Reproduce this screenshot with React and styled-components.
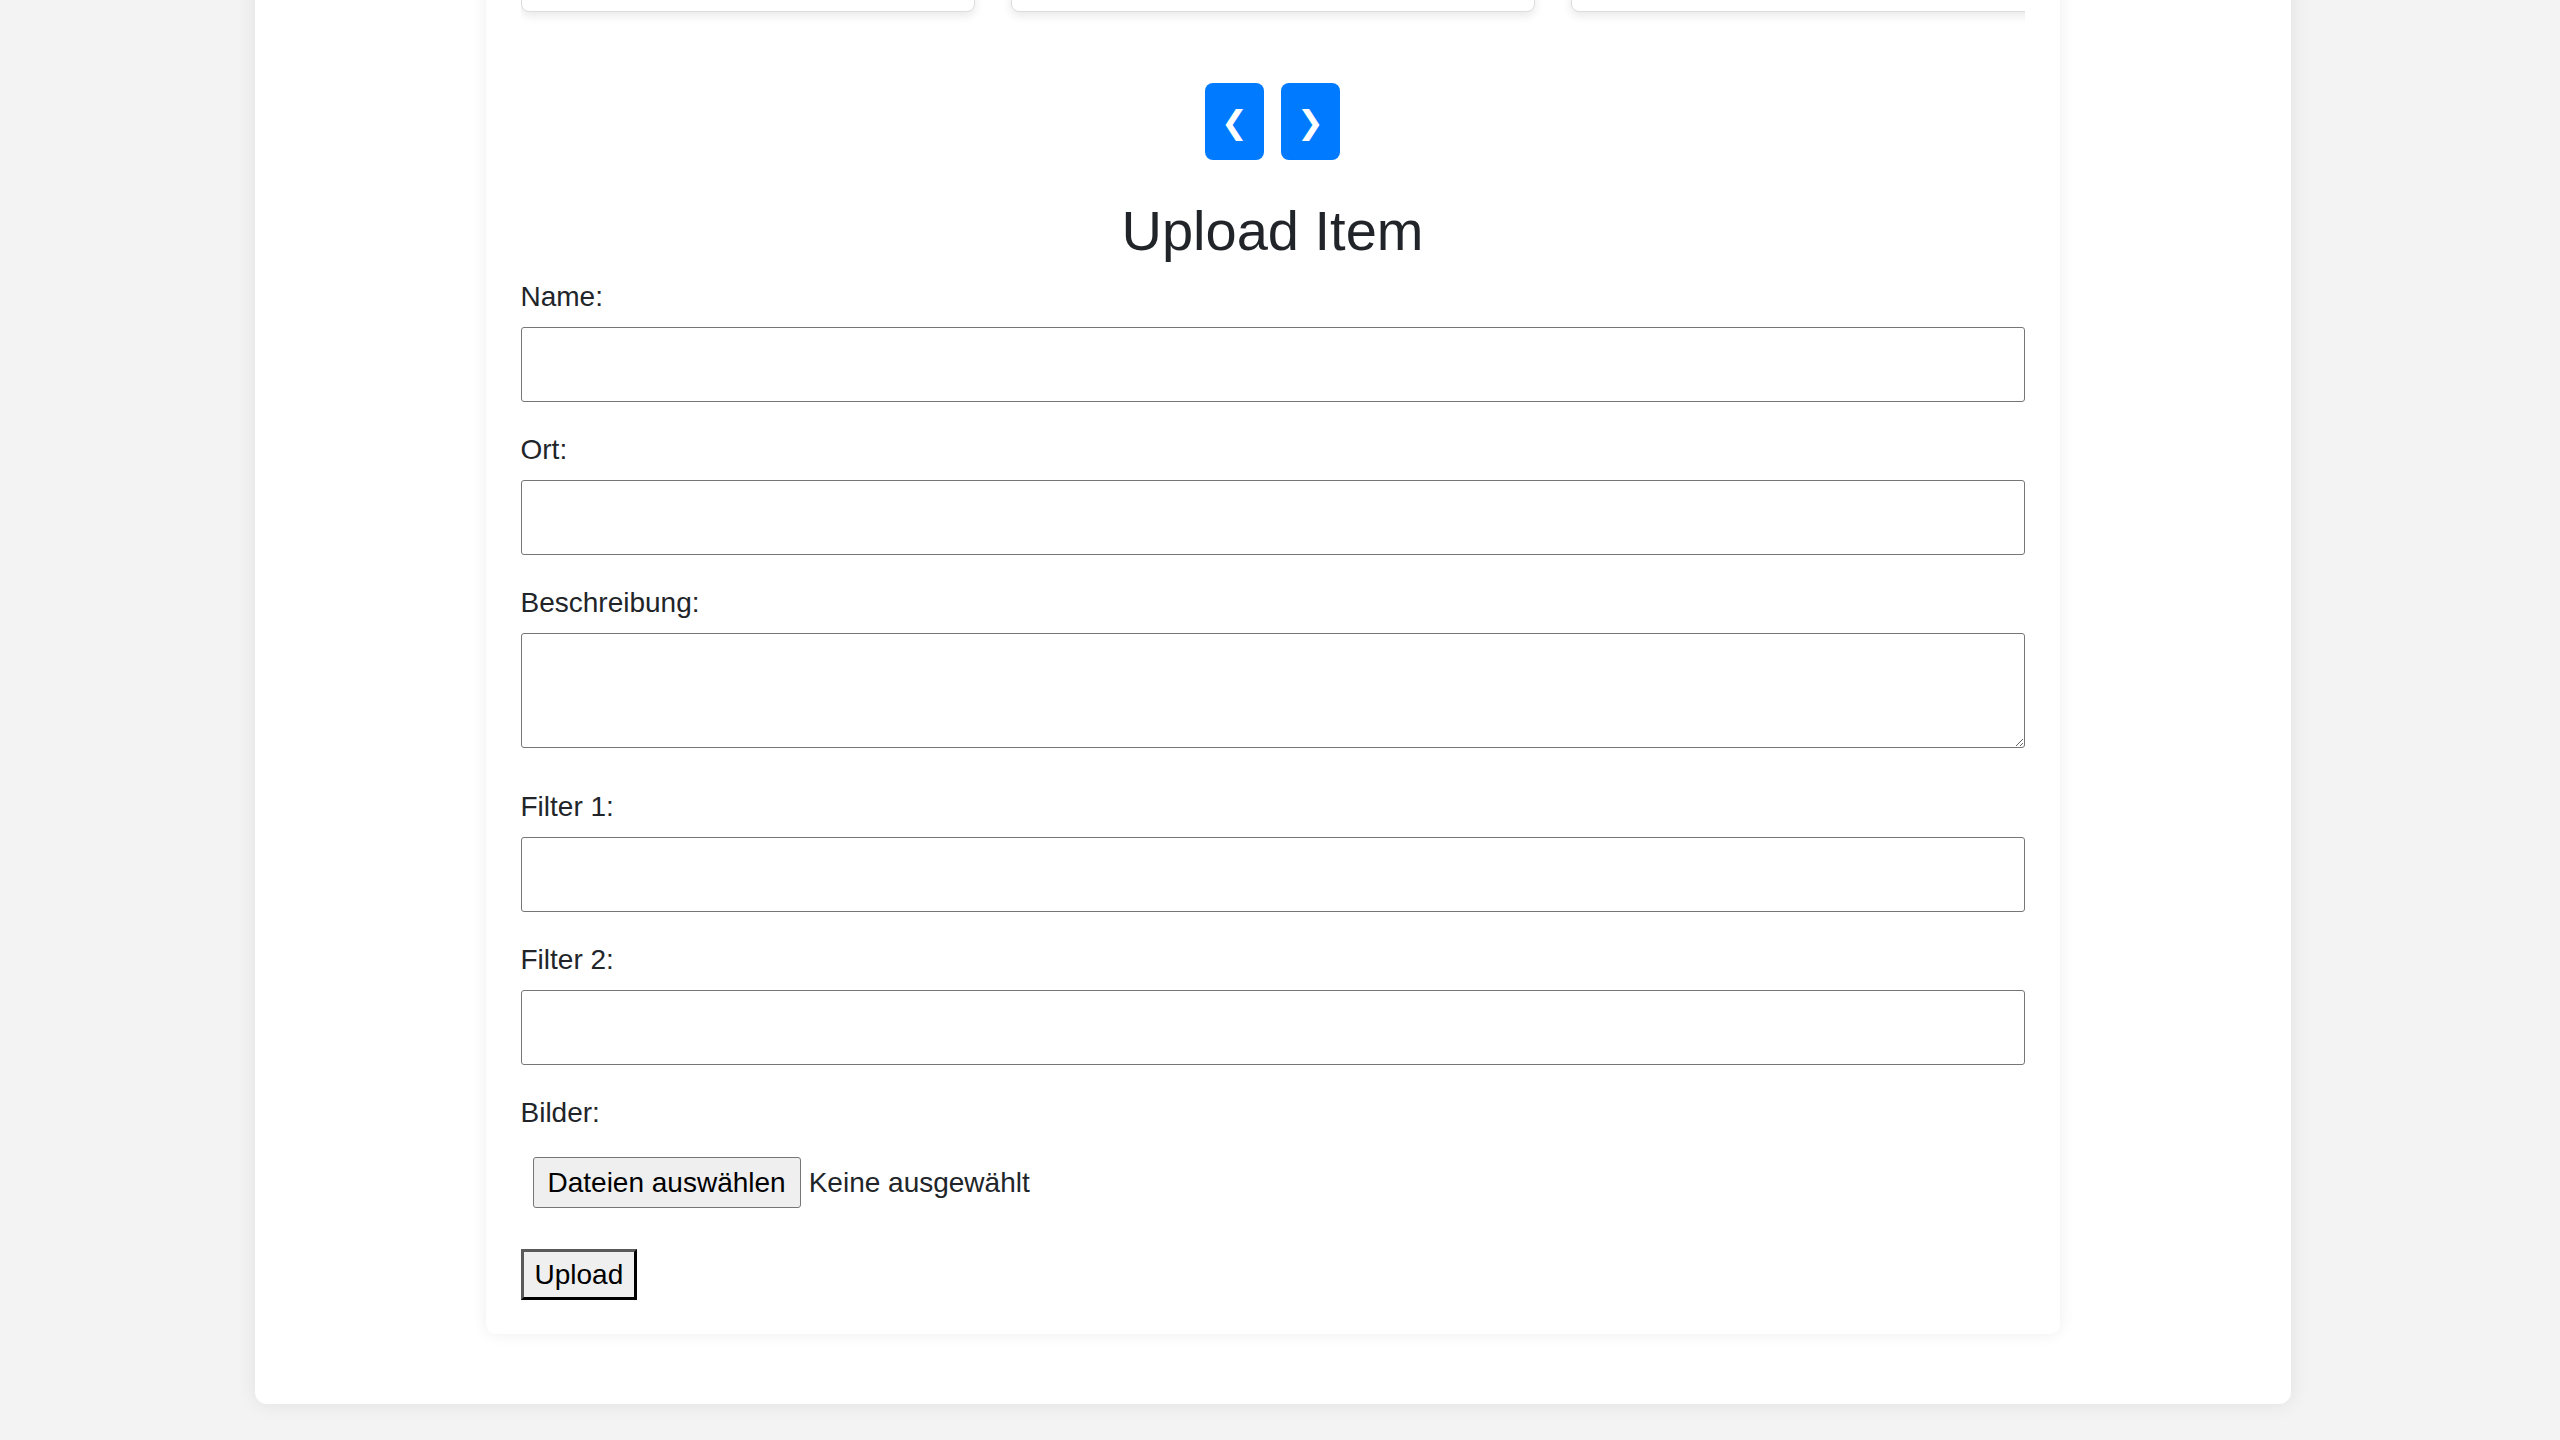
import React, { useLayoutEffect } from 'react'
import styled, { createGlobalStyle } from 'styled-components'

// the reference was taken with a 15px page scrollbar on the right,
// so the body keeps that much room free to centre the page the same way
const GlobalStyle = createGlobalStyle`
  html {
    background: #f3f3f3;
  }
  body {
    margin: 0;
    padding: 36px 15px 36px 0;
    background: #f3f3f3;
    font-family: "Liberation Sans", Arial, sans-serif;
    font-size: 28px;
    color: #212529;
  }
  *,
  *::before,
  *::after {
    box-sizing: border-box;
  }
`

const Page = styled.main`
  width: 80%;
  margin: 0 auto;
  padding: 70px 0;
  background: #fff;
  border-radius: 12px;
  box-shadow: 0 0 20px rgba(0, 0, 0, 0.08);
`

const Panel = styled.section`
  max-width: 1574px;
  margin: 0 auto;
  padding: 35px 35px 34px;
  background: #fff;
  border-radius: 10px;
  box-shadow: 0 0 16px rgba(0, 0, 0, 0.07);
`

const Carousel = styled.div`
  display: flex;
  gap: 36px;
  overflow: hidden;
  padding-bottom: 20px;
`

const ItemCard = styled.article`
  flex: 0 0 ${(p) => p.$width}px;
  height: 1353px;
  display: flex;
  flex-direction: column;
  padding: 20px 20px 60px;
  background: #fff;
  border: 1px solid #ddd;
  border-radius: 8px;
  box-shadow: 0 4px 10px rgba(0, 0, 0, 0.09);
`

const ItemImage = styled.div`
  flex: 1;
  border-radius: 6px;
  background: #e9ecef;
`

const NavRow = styled.div`
  display: flex;
  justify-content: center;
  gap: 17px;
  margin-top: 51px;
`

const NavButton = styled.button`
  width: 59px;
  height: 77px;
  display: flex;
  align-items: center;
  justify-content: center;
  padding: 0;
  border: none;
  border-radius: 8px;
  background: #007bff;
  color: #fff;
  font-family: "DejaVu Sans", sans-serif;
  font-size: 32px;
  cursor: pointer;
`

const Title = styled.h1`
  margin: 39px 0 18px;
  font-size: 56px;
  font-weight: 400;
  line-height: 64px;
  text-align: center;
  color: #212529;
`

const Form = styled.form`
  display: block;
`

const Label = styled.label`
  display: block;
  margin-bottom: 14px;
  font-size: 28px;
  line-height: 32px;
  color: #212529;
`

const TextInput = styled.input`
  display: block;
  width: 100%;
  height: 75px;
  margin-bottom: 32px;
  padding: 12px;
  background: #fff;
  border: 1px solid #767676;
  border-radius: 3px;
  font-family: inherit;
  font-size: 28px;
  color: #212529;
`

const TextArea = styled.textarea`
  display: block;
  width: 100%;
  height: 115px;
  margin-bottom: 43px;
  padding: 12px;
  background: #fff;
  border: 1px solid #767676;
  border-radius: 3px;
  font-family: inherit;
  font-size: 28px;
  color: #212529;
  resize: vertical;
`

const FileRow = styled.div`
  display: flex;
  align-items: center;
  gap: 8px;
  padding: 14px 12px;
`

const HiddenFile = styled.input`
  display: none;
`

const FileButton = styled.label`
  display: inline-flex;
  align-items: center;
  height: 51px;
  padding: 0 14px;
  background: #efefef;
  border: 1px solid #767676;
  border-radius: 3px;
  font-size: 28px;
  color: #000;
  cursor: pointer;
`

const FileStatus = styled.span`
  font-size: 28px;
  color: #212529;
`

const SubmitButton = styled.button`
  display: block;
  height: 51px;
  margin-top: 27px;
  padding: 0 11px;
  background: #efefef;
  border: 3px solid;
  border-color: #5a5a5a #000 #000 #5a5a5a;
  font-family: inherit;
  font-size: 28px;
  color: #000;
  cursor: pointer;
`

const items = [
  { id: 1, width: 454 },
  { id: 2, width: 524 },
  { id: 3, width: 520 },
]

const fields = [
  { id: 'name', label: 'Name:' },
  { id: 'ort', label: 'Ort:' },
]

const filters = [
  { id: 'filter1', label: 'Filter 1:' },
  { id: 'filter2', label: 'Filter 2:' },
]

export default function App() {
  useLayoutEffect(() => {
    window.scrollTo(0, document.documentElement.scrollHeight)
  }, [])

  return (
    <>
      <GlobalStyle />
      <Page>
        <Panel>
          <Carousel>
            {items.map((item) => (
              <ItemCard key={item.id} $width={item.width}>
                <ItemImage />
              </ItemCard>
            ))}
          </Carousel>
          <NavRow>
            <NavButton type="button" aria-label="Zurück">❮</NavButton>
            <NavButton type="button" aria-label="Weiter">❯</NavButton>
          </NavRow>
          <Title>Upload Item</Title>
          <Form onSubmit={(e) => e.preventDefault()}>
            {fields.map((f) => (
              <React.Fragment key={f.id}>
                <Label htmlFor={f.id}>{f.label}</Label>
                <TextInput type="text" id={f.id} name={f.id} />
              </React.Fragment>
            ))}
            <Label htmlFor="beschreibung">Beschreibung:</Label>
            <TextArea id="beschreibung" name="beschreibung" />
            {filters.map((f) => (
              <React.Fragment key={f.id}>
                <Label htmlFor={f.id}>{f.label}</Label>
                <TextInput type="text" id={f.id} name={f.id} />
              </React.Fragment>
            ))}
            <Label htmlFor="bilder">Bilder:</Label>
            <FileRow>
              <HiddenFile type="file" id="bilder" name="bilder" multiple />
              <FileButton htmlFor="bilder">Dateien auswählen</FileButton>
              <FileStatus>Keine ausgewählt</FileStatus>
            </FileRow>
            <SubmitButton type="submit">Upload</SubmitButton>
          </Form>
        </Panel>
      </Page>
    </>
  )
}
